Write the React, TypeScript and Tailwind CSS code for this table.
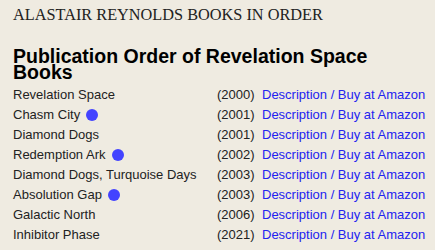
import React from 'react';

type Book = { title: string; year: number; novella?: boolean };

const books: Book[] = [
  { title: 'Revelation Space', year: 2000 },
  { title: 'Chasm City', year: 2001, novella: true },
  { title: 'Diamond Dogs', year: 2001 },
  { title: 'Redemption Ark', year: 2002, novella: true },
  { title: 'Diamond Dogs, Turquoise Days', year: 2003 },
  { title: 'Absolution Gap', year: 2003, novella: true },
  { title: 'Galactic North', year: 2006 },
  { title: 'Inhibitor Phase', year: 2021 },
];

export default function App() {
  return (
    <div className="w-[435px] h-[250px] overflow-hidden bg-[#efebe1] px-[13px] pt-[7px]">
      <h1 className="font-['Liberation_Serif',serif] text-[16.3px] leading-[16px] text-[#222]">
        ALASTAIR REYNOLDS BOOKS IN ORDER
      </h1>
      <h2 className="mt-[25px] w-[380px] font-['Liberation_Sans',Arial,sans-serif] font-bold text-[19.5px] leading-[16px] text-black">
        Publication Order of Revelation Space Books
      </h2>
      <div className="mt-[5px] grid grid-cols-[204px_45px_auto] whitespace-nowrap font-['Liberation_Sans',Arial,sans-serif] text-[13px] leading-[20px] text-[#222]">
        {books.map(b => (
          <React.Fragment key={b.title}>
            <div className="flex items-center">
              {b.title}
              {b.novella && <span className="ml-[6px] inline-block w-[12px] h-[12px] rounded-full bg-[#4343ff]" />}
            </div>
            <div>({b.year})</div>
            <a className="text-[#2323f0]">Description / Buy at Amazon</a>
          </React.Fragment>
        ))}
      </div>
    </div>
  );
}
